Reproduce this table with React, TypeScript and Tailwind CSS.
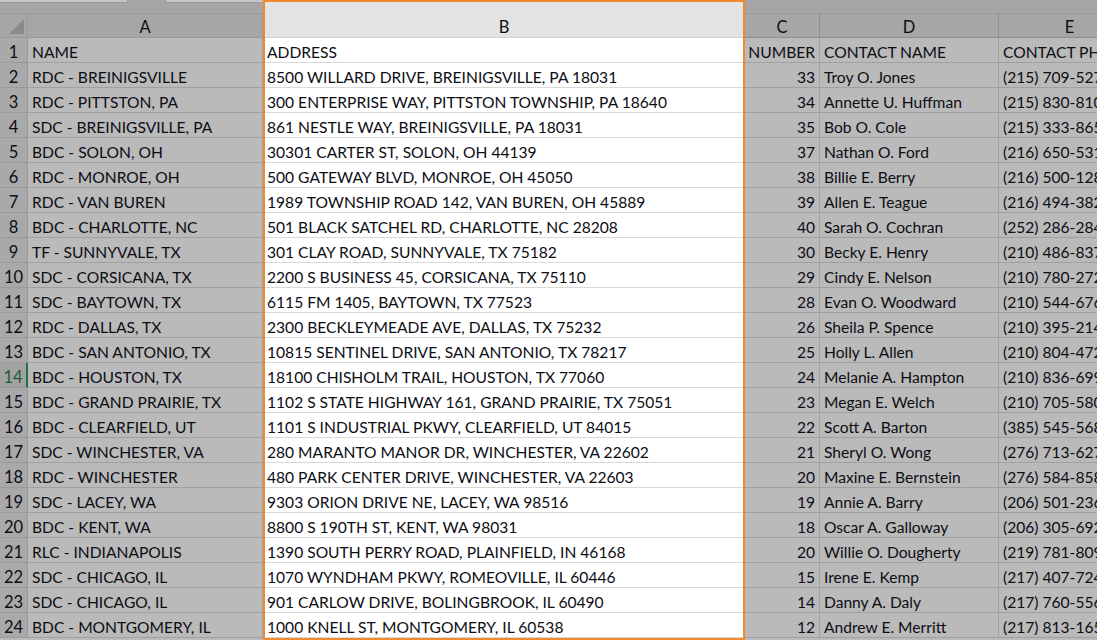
import React from 'react'

const rows: [string, string, string, string, string][] = [
  ['NAME', 'ADDRESS', 'NUMBER', 'CONTACT NAME', 'CONTACT PHONE'],
  ['RDC - BREINIGSVILLE', '8500 WILLARD DRIVE, BREINIGSVILLE, PA 18031', '33', 'Troy O. Jones', '(215) 709-5271'],
  ['RDC - PITTSTON, PA', '300 ENTERPRISE WAY, PITTSTON TOWNSHIP, PA 18640', '34', 'Annette U. Huffman', '(215) 830-8104'],
  ['SDC - BREINIGSVILLE, PA', '861 NESTLE WAY, BREINIGSVILLE, PA 18031', '35', 'Bob O. Cole', '(215) 333-8652'],
  ['BDC - SOLON, OH', '30301 CARTER ST, SOLON, OH 44139', '37', 'Nathan O. Ford', '(216) 650-5312'],
  ['RDC - MONROE, OH', '500 GATEWAY BLVD, MONROE, OH 45050', '38', 'Billie E. Berry', '(216) 500-1284'],
  ['RDC - VAN BUREN', '1989 TOWNSHIP ROAD 142, VAN BUREN, OH 45889', '39', 'Allen E. Teague', '(216) 494-3821'],
  ['BDC - CHARLOTTE, NC', '501 BLACK SATCHEL RD, CHARLOTTE, NC 28208', '40', 'Sarah O. Cochran', '(252) 286-2847'],
  ['TF - SUNNYVALE, TX', '301 CLAY ROAD, SUNNYVALE, TX 75182', '30', 'Becky E. Henry', '(210) 486-8379'],
  ['SDC - CORSICANA, TX', '2200 S BUSINESS 45, CORSICANA, TX 75110', '29', 'Cindy E. Nelson', '(210) 780-2725'],
  ['SDC - BAYTOWN, TX', '6115 FM 1405, BAYTOWN, TX 77523', '28', 'Evan O. Woodward', '(210) 544-6763'],
  ['RDC - DALLAS, TX', '2300 BECKLEYMEADE AVE, DALLAS, TX 75232', '26', 'Sheila P. Spence', '(210) 395-2148'],
  ['BDC - SAN ANTONIO, TX', '10815 SENTINEL DRIVE, SAN ANTONIO, TX 78217', '25', 'Holly L. Allen', '(210) 804-4721'],
  ['BDC - HOUSTON, TX', '18100 CHISHOLM TRAIL, HOUSTON, TX 77060', '24', 'Melanie A. Hampton', '(210) 836-6993'],
  ['BDC - GRAND PRAIRIE, TX', '1102 S STATE HIGHWAY 161, GRAND PRAIRIE, TX 75051', '23', 'Megan E. Welch', '(210) 705-5804'],
  ['BDC - CLEARFIELD, UT', '1101 S INDUSTRIAL PKWY, CLEARFIELD, UT 84015', '22', 'Scott A. Barton', '(385) 545-5681'],
  ['SDC - WINCHESTER, VA', '280 MARANTO MANOR DR, WINCHESTER, VA 22602', '21', 'Sheryl O. Wong', '(276) 713-6275'],
  ['RDC - WINCHESTER', '480 PARK CENTER DRIVE, WINCHESTER, VA 22603', '20', 'Maxine E. Bernstein', '(276) 584-8582'],
  ['SDC - LACEY, WA', '9303 ORION DRIVE NE, LACEY, WA 98516', '19', 'Annie A. Barry', '(206) 501-2367'],
  ['BDC - KENT, WA', '8800 S 190TH ST, KENT, WA 98031', '18', 'Oscar A. Galloway', '(206) 305-6924'],
  ['RLC - INDIANAPOLIS', '1390 SOUTH PERRY ROAD, PLAINFIELD, IN 46168', '20', 'Willie O. Dougherty', '(219) 781-8096'],
  ['SDC - CHICAGO, IL', '1070 WYNDHAM PKWY, ROMEOVILLE, IL 60446', '15', 'Irene E. Kemp', '(217) 407-7243'],
  ['SDC - CHICAGO, IL', '901 CARLOW DRIVE, BOLINGBROOK, IL 60490', '14', 'Danny A. Daly', '(217) 760-5562'],
  ['BDC - MONTGOMERY, IL', '1000 KNELL ST, MONTGOMERY, IL 60538', '12', 'Andrew E. Merritt', '(217) 813-1653'],
]

const font = { fontFamily: 'Lato, "Liberation Sans", sans-serif' }

export default function App() {
  return (
    <div
      className="relative w-[1097px] h-[640px] overflow-hidden bg-[#bababa] text-[15.6px] text-[#0d0d14]"
      style={font}
    >
      {/* strip above the column headers */}
      <div className="flex h-[14px]">
        <div className="w-[263px] flex flex-col bg-[#a5a5a5] border-b border-[#999999]">
          <div className="flex h-[3px]">
            <div className="w-[128px] bg-[#c6c6c6] border-r border-b border-[#9a9a9a]" />
            <div className="w-[37px]" />
            <div className="flex-1 bg-[#c6c6c6] border-l border-b border-[#9a9a9a]" />
          </div>
        </div>
        <div className="w-[482px] bg-[#e3e3e3]" />
        <div className="flex-1 bg-[#a5a5a5] border-b border-[#999999]" />
      </div>

      {/* column headers */}
      <div className="flex h-[24px] leading-[18px] text-[16.5px]">
        <div className="w-[28px] shrink-0 bg-[#a6a6a6] border-r border-b border-[#9a9a9a] flex items-end justify-end p-[2px]">
          <div className="w-0 h-0 border-l-[15px] border-l-transparent border-b-[15px] border-b-[#8a8a8a] mb-[1px] mr-[1px]" />
        </div>
        <div className="w-[235px] shrink-0 bg-[#a6a6a6] border-r border-b border-[#9a9a9a] flex items-center justify-center pt-[3px]">A</div>
        <div className="w-[482px] shrink-0 bg-[#e3e3e3] border-b border-[#d0d0d0] flex items-center justify-center pt-[3px]">B</div>
        <div className="w-[75px] shrink-0 bg-[#a6a6a6] border-r border-b border-[#8f8f8f] flex items-center justify-center pt-[3px]">C</div>
        <div className="w-[179px] shrink-0 bg-[#a6a6a6] border-r border-b border-[#8f8f8f] flex items-center justify-center pt-[3px]">D</div>
        <div className="w-[142px] shrink-0 bg-[#a6a6a6] border-r border-b border-[#8f8f8f] flex items-center justify-center pt-[3px]">E</div>
      </div>

      {/* data rows */}
      {rows.map((r, i) => {
        const active = i === 13
        return (
          <div key={i} className="flex h-[25px] leading-[18px] whitespace-nowrap">
            <div
              className={
                active
                  ? 'w-[28px] shrink-0 bg-[#a2a2a2] border-r-2 border-b border-r-[#217346] border-b-[#9a9a9a] flex items-end justify-center pb-[1px] text-[16.5px] text-[#1e5c38]'
                  : 'w-[28px] shrink-0 bg-[#a9a9a9] border-r border-b border-[#9a9a9a] flex items-end justify-center pb-[1px] text-[16.5px]'
              }
            >
              {i + 1}
            </div>
            <div className="w-[235px] shrink-0 border-r border-b border-[#a0a0a0] flex items-end pl-[4px] pb-[1px] overflow-hidden">
              {r[0]}
            </div>
            <div className="w-[482px] shrink-0 bg-white border-b border-[#d9d9d9] flex items-end pl-[4px] pb-[1px] overflow-hidden">
              {r[1]}
            </div>
            <div className="w-[75px] shrink-0 border-r border-b border-[#a0a0a0] flex items-end justify-end pr-[4px] pb-[1px]">
              {r[2]}
            </div>
            <div className="w-[179px] shrink-0 border-r border-b border-[#a0a0a0] flex items-end pl-[4px] pb-[1px] overflow-hidden">
              {r[3]}
            </div>
            <div className="w-[142px] shrink-0 border-r border-b border-[#a0a0a0] flex items-end pl-[4px] pb-[1px]">
              {r[4]}
            </div>
          </div>
        )
      })}

      {/* selection outline around column B */}
      <div className="absolute left-[263px] top-0 w-[482px] h-[640px] border-2 border-[#f08a2c] pointer-events-none" />
    </div>
  )
}
